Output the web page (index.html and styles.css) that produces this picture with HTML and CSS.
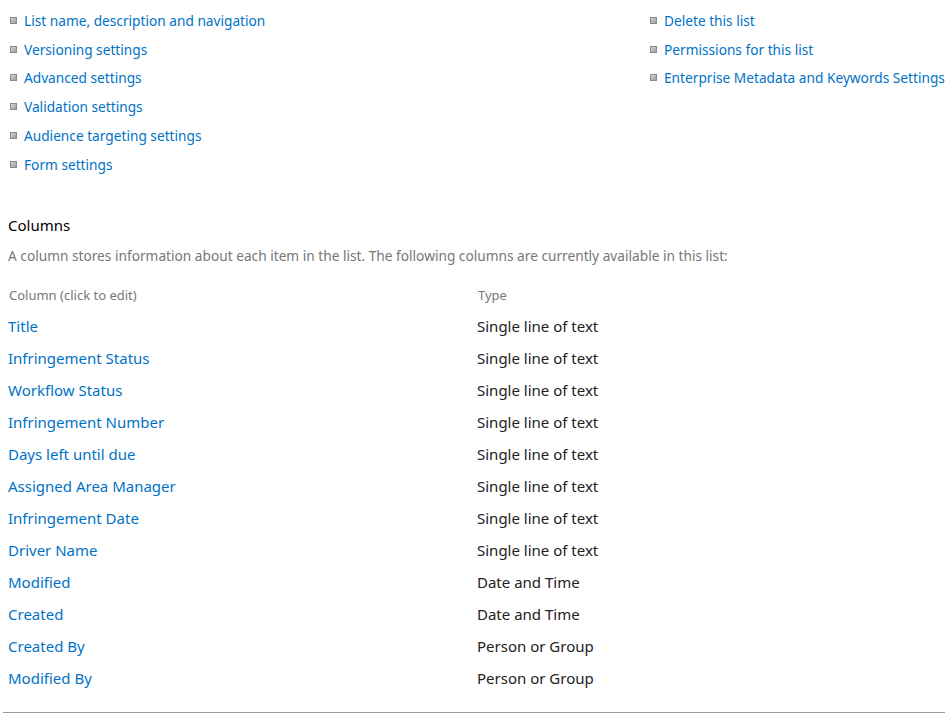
FILE: index.html
```html
<!DOCTYPE html>
<html>
<head>
<meta charset="utf-8">
<link rel="stylesheet" href="styles.css">
</head>
<body>
<div class="page">
  <div class="settings">
    <ul class="links">
      <li><span class="bullet"></span><a href="#">List name, description and navigation</a></li>
      <li><span class="bullet"></span><a href="#">Versioning settings</a></li>
      <li><span class="bullet"></span><a href="#">Advanced settings</a></li>
      <li><span class="bullet"></span><a href="#">Validation settings</a></li>
      <li><span class="bullet"></span><a href="#">Audience targeting settings</a></li>
      <li><span class="bullet"></span><a href="#">Form settings</a></li>
    </ul>
    <ul class="links right">
      <li><span class="bullet"></span><a href="#">Delete this list</a></li>
      <li><span class="bullet"></span><a href="#">Permissions for this list</a></li>
      <li><span class="bullet"></span><a href="#">Enterprise Metadata and Keywords Settings</a></li>
    </ul>
  </div>
  <h2 class="heading">Columns</h2>
  <p class="desc">A column stores information about each item in the list. The following columns are currently available in this list:</p>
  <div class="table">
    <div class="row head"><span class="c1">Column (click to edit)</span><span class="c2">Type</span></div>
    <div class="row"><a class="c1" href="#">Title</a><span class="c2">Single line of text</span></div>
    <div class="row"><a class="c1" href="#">Infringement Status</a><span class="c2">Single line of text</span></div>
    <div class="row"><a class="c1" href="#">Workflow Status</a><span class="c2">Single line of text</span></div>
    <div class="row"><a class="c1" href="#">Infringement Number</a><span class="c2">Single line of text</span></div>
    <div class="row"><a class="c1" href="#">Days left until due</a><span class="c2">Single line of text</span></div>
    <div class="row"><a class="c1" href="#">Assigned Area Manager</a><span class="c2">Single line of text</span></div>
    <div class="row"><a class="c1" href="#">Infringement Date</a><span class="c2">Single line of text</span></div>
    <div class="row"><a class="c1" href="#">Driver Name</a><span class="c2">Single line of text</span></div>
    <div class="row"><a class="c1" href="#">Modified</a><span class="c2">Date and Time</span></div>
    <div class="row"><a class="c1" href="#">Created</a><span class="c2">Date and Time</span></div>
    <div class="row"><a class="c1" href="#">Created By</a><span class="c2">Person or Group</span></div>
    <div class="row"><a class="c1" href="#">Modified By</a><span class="c2">Person or Group</span></div>
  </div>
  <div class="rule"></div>
</div>
</body>
</html>
```
FILE: styles.css
```css
html, body {
  margin: 0;
  padding: 0;
  background: #fff;
}
body {
  font-family: "Noto Sans", "Open Sans", sans-serif;
  color: #333;
  overflow: hidden;
}
.page {
  width: 945px;
  height: 721px;
  padding: 0;
}
.settings {
  display: flex;
  padding-top: 6px;
}
.links {
  list-style: none;
  margin: 0;
  padding: 0 0 0 10px;
  width: 640px;
  flex: none;
}
.links.right {
  padding-left: 0;
  flex: 1;
  width: auto;
}
.links li {
  display: flex;
  align-items: center;
  height: 28.8px;
  font-size: 13.7px;
  white-space: nowrap;
}
.bullet {
  width: 5px;
  height: 5px;
  border: 1px solid #8a8a8a;
  background: linear-gradient(135deg, #d8d8d8, #9a9a9a);
  margin-right: 7px;
  flex: none;
}
a {
  color: #0072c6;
  text-decoration: none;
}
.heading {
  margin: 35px 0 0 8px;
  font-size: 15px;
  font-weight: normal;
  color: #000;
  line-height: 22px;
}
.desc {
  margin: 10px 0 0 8px;
  font-size: 13.7px;
  color: #777;
  line-height: 20px;
}
.table {
  margin: 18px 0 0 8px;
}
.row {
  display: flex;
  height: 32px;
  align-items: center;
  font-size: 15px;
}
.row.head {
  height: 22px;
  font-size: 13px;
  color: #777;
  margin-bottom: 4px;
}
.row.head .c1 { padding-left: 1px; }
.c1 {
  width: 469px;
  flex: none;
}
.c2 {
  color: #222;
}
.row.head .c2 { color: #777; }
.rule {
  margin: 18px 0 0 3px;
  border-top: 1px solid #999;
}
```
